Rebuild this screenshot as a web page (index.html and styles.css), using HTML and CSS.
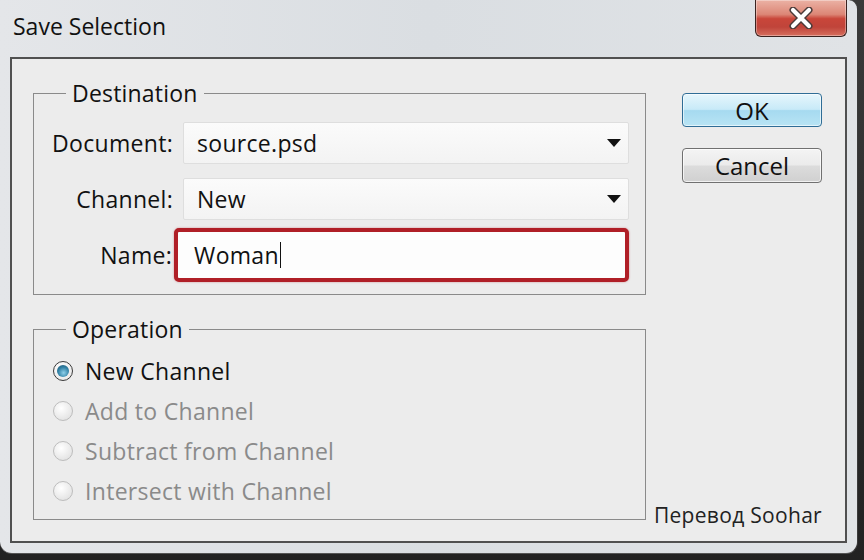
FILE: index.html
```html
<!DOCTYPE html>
<html>
<head>
<meta charset="utf-8">
<link rel="stylesheet" href="styles.css">
</head>
<body>
<div class="window">
  <div class="titlebar">
    <span class="title">Save Selection</span>
    <div class="close">
      <svg width="24" height="22" viewBox="0 0 24 22">
        <path d="M4 3 L20 19 M20 3 L4 19" stroke="#4a3a38" stroke-width="7" stroke-linecap="round"/>
        <path d="M4 3 L20 19 M20 3 L4 19" stroke="#ffffff" stroke-width="4.2" stroke-linecap="round"/>
      </svg>
    </div>
  </div>
  <div class="client">
    <div class="main">
      <fieldset class="group dest">
        <legend>Destination</legend>
        <div class="row">
          <span class="lbl">Document:</span>
          <div class="combo"><span>source.psd</span><i class="arrow"></i></div>
        </div>
        <div class="row row2">
          <span class="lbl">Channel:</span>
          <div class="combo"><span>New</span><i class="arrow"></i></div>
        </div>
        <div class="row row3">
          <span class="lbl">Name:</span>
          <div class="namefield"><span>Woman</span><i class="caret"></i></div>
        </div>
      </fieldset>
      <fieldset class="group oper">
        <legend>Operation</legend>
        <div class="radio-row"><span class="radio checked"><span class="dot"></span></span><span>New Channel</span></div>
        <div class="radio-row disabled"><span class="radio"></span><span>Add to Channel</span></div>
        <div class="radio-row disabled"><span class="radio"></span><span>Subtract from Channel</span></div>
        <div class="radio-row disabled"><span class="radio"></span><span>Intersect with Channel</span></div>
      </fieldset>
    </div>
    <div class="side">
      <div class="btn ok">OK</div>
      <div class="btn cancel">Cancel</div>
      <div class="credit">Перевод Soohar</div>
    </div>
  </div>
</div>
</body>
</html>
```
FILE: styles.css
```css
* { box-sizing: border-box; }
html, body { margin: 0; padding: 0; }
body {
  width: 864px;
  height: 560px;
  overflow: hidden;
  background: linear-gradient(#3a3a3a, #222);
  font-family: "Open Sans", "Noto Sans", sans-serif;
  color: #111;
}
.window {
  width: 858px;
  height: 554px;
  background: linear-gradient(to right, #e4e6e9, #dadee2 50%, #e0e3e6);
  border-radius: 0 9px 12px 12px;
  border-right: 1px solid #3a3a3a;
  border-bottom: 1px solid #555;
  display: flex;
  flex-direction: column;
}
.titlebar {
  height: 57px;
  display: flex;
  justify-content: space-between;
  align-items: flex-start;
}
.title {
  font-size: 23px;
  padding-left: 13px;
  padding-top: 11px;
  line-height: 30px;
  color: #111;
}
.close {
  width: 92px;
  height: 37px;
  margin-right: 10px;
  border: 1px solid #3b2320;
  border-top: none;
  border-radius: 0 0 6px 6px;
  background: linear-gradient(#ebb2a5, #dc8676 40%, #c9463a 52%, #c0443a 75%, #d66f5e);
  box-shadow: inset 0 0 0 1px rgba(255,255,255,0.35);
  display: flex;
  align-items: center;
  justify-content: center;
}
.client {
  height: 486px;
  margin: 0 10px;
  border: 2px solid #505050;
  background: #ececec;
  display: flex;
}
.main {
  width: 634px;
  padding: 21px 0 0 21px;
}
.group {
  width: 613px;
  margin: 0;
  border: 1px solid #8a8a8a;
  min-inline-size: 0;
}
legend {
  font-size: 23px;
  line-height: 26px;
  letter-spacing: 0.2px;
  padding: 0 6px;
  color: #111;
}
.dest {
  padding: 16px 16px 12px 12px;
}
.dest legend { margin-left: 20px; }
.row {
  display: flex;
  align-items: center;
  gap: 10px;
  height: 42px;
}
.row2 { margin-top: 14px; }
.row3 { margin-top: 8px; height: 54px; }
.lbl {
  width: 127px;
  text-align: right;
  font-size: 23px;
  letter-spacing: 0.3px;
  color: #111;
  white-space: nowrap;
}
.combo {
  width: 446px;
  height: 42px;
  background: linear-gradient(#fbfbfb, #f3f3f3);
  border: 1px solid #dedede;
  border-radius: 2px;
  display: flex;
  align-items: center;
  justify-content: space-between;
  padding: 0 7px 0 13px;
  font-size: 23px;
  letter-spacing: 0.3px;
}
.arrow {
  width: 0;
  height: 0;
  border-left: 7.5px solid transparent;
  border-right: 7.5px solid transparent;
  border-top: 8px solid #111;
}
.namefield {
  width: 458px;
  height: 54px;
  margin-left: -8px;
  border: 4px solid #b01f27;
  border-radius: 5px;
  background: #fdfdfd;
  box-shadow: 0 0 2px rgba(184,36,43,0.5);
  display: flex;
  align-items: center;
  padding-left: 16px;
  font-size: 23px;
  letter-spacing: 0.3px;
}
.caret {
  width: 1.5px;
  height: 26px;
  background: #111;
  margin-left: 1px;
}
.oper {
  margin-top: 21px;
  padding: 9px 16px 8px 19px;
}
.oper legend { margin-left: 13px; }
.radio-row {
  height: 40px;
  display: flex;
  align-items: center;
  gap: 12px;
  font-size: 23px;
  letter-spacing: 0.3px;
  color: #111;
  white-space: nowrap;
}
.radio-row.disabled { color: #8a8a8a; }
.radio {
  width: 20px;
  height: 20px;
  border-radius: 50%;
  border: 1px solid #bdbdbd;
  background: radial-gradient(circle at 40% 35%, #ffffff, #e6e6e6 70%, #d6d6d6);
  display: flex;
  align-items: center;
  justify-content: center;
}
.radio.checked {
  border: 1px solid #3a3a3a;
  background: radial-gradient(circle at 40% 35%, #ffffff, #e2e2e2);
}
.dot {
  width: 12px;
  height: 12px;
  border-radius: 50%;
  background: radial-gradient(circle at 55% 65%, #8fd0ea, #2f7fa3 55%, #1c4f6a);
}
.side {
  flex: 1;
  display: flex;
  flex-direction: column;
  align-items: flex-end;
  padding: 34px 23px 13px 0;
}
.btn {
  width: 140px;
  display: flex;
  align-items: center;
  justify-content: center;
  font-size: 24px;
  border-radius: 4px;
  color: #111;
}
.ok {
  height: 34px;
  border: 1px solid #2f6d96;
  background: linear-gradient(#e6f6fc, #c8eaf8 48%, #a6daf0 52%, #b8e4f4);
  box-shadow: inset 0 0 0 1px rgba(255,255,255,0.6);
}
.cancel {
  height: 35px;
  margin-top: 21px;
  border: 1px solid #707070;
  background: linear-gradient(#f4f4f4, #ebebeb 48%, #dcdcdc 52%, #d0d0d0);
  box-shadow: inset 0 0 0 1px rgba(255,255,255,0.7);
}
.credit {
  margin-top: auto;
  font-size: 21px;
  line-height: 26px;
  letter-spacing: 0.3px;
  color: #222;
  white-space: nowrap;
}
```
